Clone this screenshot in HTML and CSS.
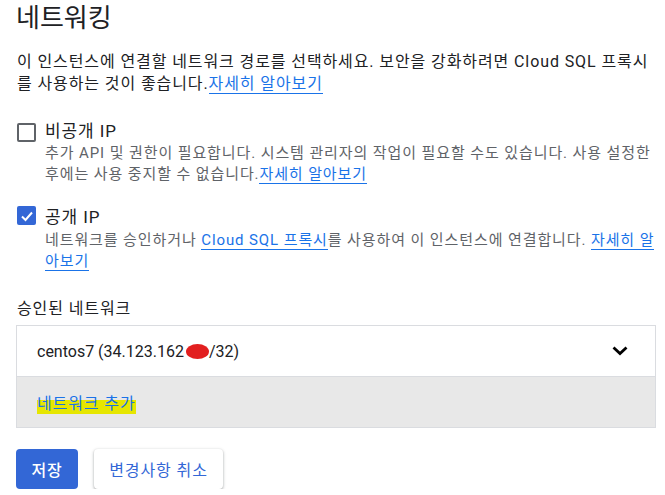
FILE: index.html
```html
<!DOCTYPE html>
<html lang="ko">
<head>
<meta charset="utf-8">
<link rel="stylesheet" href="styles.css">
</head>
<body>
<div class="page">
  <h1 class="title">네트워킹</h1>
  <p class="intro">이 인스턴스에 연결할 네트워크 경로를 선택하세요. 보안을 강화하려면 Cloud SQL 프록시를 사용하는 것이 좋습니다.<a class="link" href="#">자세히 알아보기</a></p>

  <div class="option option-first">
    <span class="checkbox"></span>
    <div class="option-body">
      <div class="option-label">비공개 IP</div>
      <div class="option-desc">추가 API 및 권한이 필요합니다. 시스템 관리자의 작업이 필요할 수도 있습니다. 사용 설정한 후에는 사용 중지할 수 없습니다.<a class="link" href="#">자세히 알아보기</a></div>
    </div>
  </div>

  <div class="option option-second">
    <span class="checkbox checked">
      <svg viewBox="0 0 18 18" width="18" height="18"><polyline points="4,9.5 7.5,13 14,5.5" fill="none" stroke="#fff" stroke-width="2"/></svg>
    </span>
    <div class="option-body">
      <div class="option-label">공개 IP</div>
      <div class="option-desc">네트워크를 승인하거나 <a class="link" href="#">Cloud SQL 프록시</a>를 사용하여 이 인스턴스에 연결합니다. <a class="link" href="#">자세히 알아보기</a></div>
    </div>
  </div>

  <div class="section-label">승인된 네트워크</div>
  <div class="net-box">
    <div class="net-row">
      <span class="net-name">centos7 (34.123.162<span class="redact"></span>/32)</span>
      <svg class="chevron" viewBox="0 0 16 10" width="16" height="10"><polyline points="1.5,1.5 8,7.5 14.5,1.5" fill="none" stroke="#000" stroke-width="2.8"/></svg>
    </div>
    <div class="net-add">
      <span class="marked">네트워크 추가</span>
    </div>
  </div>

  <div class="actions">
    <button class="btn btn-primary">저장</button>
    <button class="btn btn-secondary">변경사항 취소</button>
  </div>
</div>
</body>
</html>
```

FILE: styles.css
```css
html, body {
  margin: 0;
  padding: 0;
  background: #fff;
}
body {
  font-family: "Roboto", "Noto Sans CJK KR", sans-serif;
  color: #202124;
}
.page {
  width: 640px;
  padding: 0 0 0 16px;
}
.title {
  margin: 0;
  padding-top: 2px;
  font-size: 26px;
  font-weight: 400;
  line-height: 32px;
  color: #202124;
}
.intro {
  margin: 17px 0 0 1px;
  font-size: 16px;
  line-height: 22px;
  letter-spacing: 0.9px;
  color: #202124;
}
.link {
  color: #1a73e8;
  text-decoration: none;
  border-bottom: 1px solid #1a73e8;
}
.option {
  display: flex;
  gap: 9px;
  margin-left: 1px;
}
.option-first {
  margin-top: 23px;
}
.option-second {
  margin-top: 16px;
}
.checkbox {
  flex: none;
  width: 15px;
  height: 15px;
  border: 2px solid #5f6368;
  border-radius: 2px;
  margin-top: 5px;
}
.checkbox.checked {
  width: 19px;
  height: 19px;
  border: none;
  background: #3367d6;
  display: flex;
  align-items: center;
  justify-content: center;
}
.option-label {
  padding-top: 1px;
  font-size: 17px;
  line-height: 24px;
  letter-spacing: 0.9px;
  color: #202124;
}
.option-second .option-label {
  padding-top: 4px;
}
.option-desc {
  font-size: 15px;
  line-height: 21px;
  letter-spacing: 0.9px;
  color: #5f6368;
}
.option-second .option-desc {
  margin-top: 1px;
}
.section-label {
  margin-top: 25px;
  margin-left: 1px;
  font-size: 16px;
  line-height: 24px;
  letter-spacing: 0.9px;
  color: #202124;
}
.net-box {
  margin-top: 4px;
  width: 638px;
  border: 1px solid #dadce0;
}
.net-row {
  height: 50px;
  padding: 0 27px 0 20px;
  display: flex;
  align-items: center;
  justify-content: space-between;
  border-bottom: 1px solid #dadce0;
  background: #fff;
}
.net-name {
  font-size: 16px;
  color: #202124;
  display: flex;
  align-items: center;
}
.redact {
  display: inline-block;
  width: 23px;
  height: 15px;
  margin-left: 2px;
  border-radius: 50%;
  background: #e21f1f;
}
.chevron {
  display: block;
}
.net-add {
  height: 50px;
  padding: 0 20px;
  display: flex;
  align-items: center;
  background: #e8e8e8;
}
.marked {
  font-size: 16px;
  letter-spacing: 0.9px;
  color: #1a73e8;
  background: linear-gradient(to bottom, transparent 42%, #e6e600 42%, #e6e600 100%);
}
.actions {
  display: flex;
  gap: 16px;
  margin-top: 21px;
}
.btn {
  height: 40px;
  border-radius: 4px;
  font-family: "Roboto", "Noto Sans CJK KR", sans-serif;
  font-size: 16px;
  letter-spacing: 0.9px;
  padding: 0;
  cursor: pointer;
}
.btn-primary {
  border: none;
  background: #3367d6;
  color: #fff;
  width: 62px;
  font-weight: 500;
}
.btn-secondary {
  border: none;
  background: #fff;
  color: #3367d6;
  width: 129px;
  box-shadow: 0 1px 2px rgba(60,64,67,0.3), 0 1px 3px 1px rgba(60,64,67,0.15);
}
```
